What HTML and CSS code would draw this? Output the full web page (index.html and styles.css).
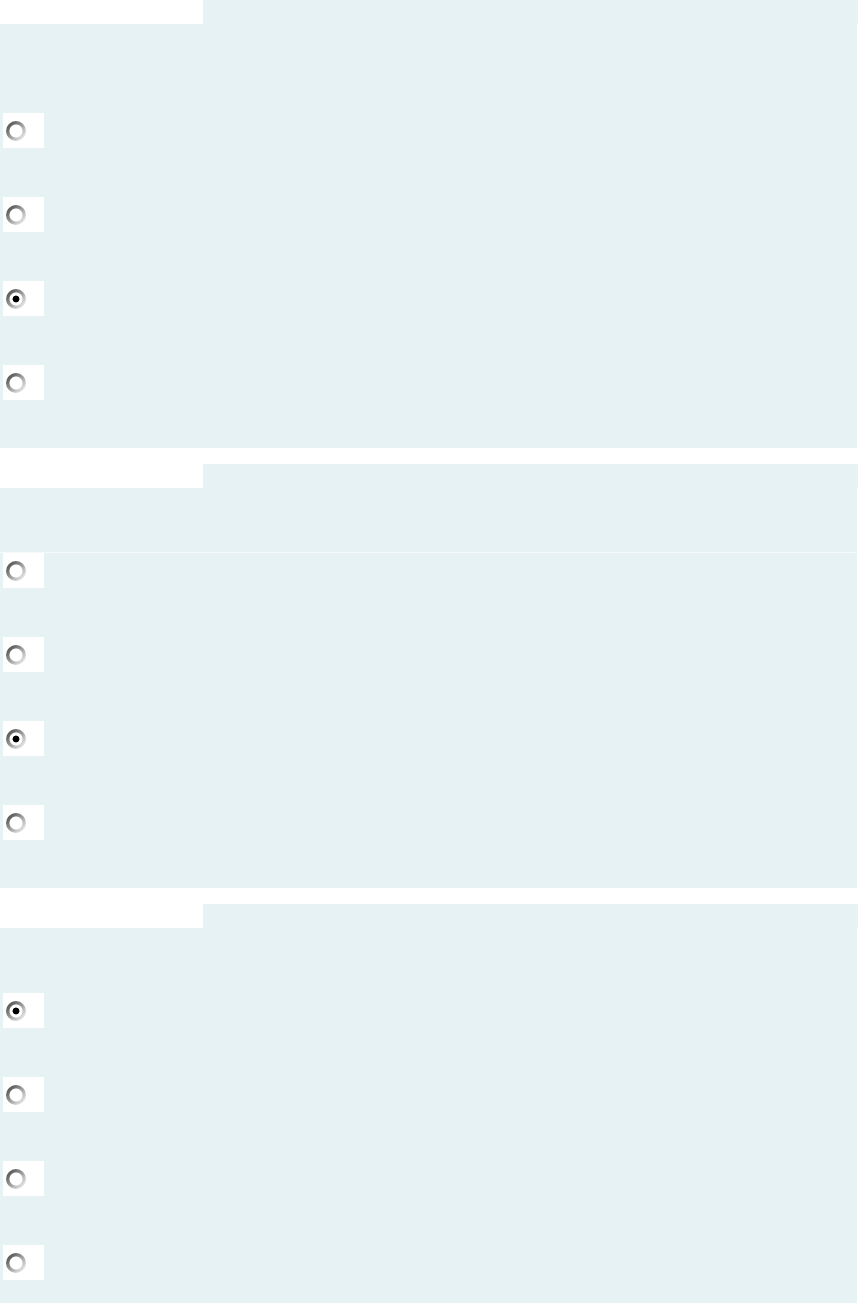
FILE: index.html
```html
<!DOCTYPE html>
<html lang="en">
  <head>
    <meta charset="UTF-8" />
    <meta name="viewport" content="width=device-width, initial-scale=1.0" />
    <title>Survey</title>
    <link rel="stylesheet" href="styles.css">
  </head>
  <body>
    <main>
      <section class="question q-first">
        <div class="q-head"><div class="q-tab"></div></div>
        <div class="q-body">
          <ul class="options">
            <li><label class="opt"><input type="radio" name="q1" /></label></li>
            <li><label class="opt"><input type="radio" name="q1" /></label></li>
            <li><label class="opt"><input type="radio" name="q1" checked /></label></li>
            <li><label class="opt"><input type="radio" name="q1" /></label></li>
          </ul>
        </div>
      </section>
      <section class="question q-lined">
        <div class="q-head"><div class="q-tab"></div></div>
        <div class="q-body">
          <ul class="options">
            <li><label class="opt"><input type="radio" name="q2" /></label></li>
            <li><label class="opt"><input type="radio" name="q2" /></label></li>
            <li><label class="opt"><input type="radio" name="q2" checked /></label></li>
            <li><label class="opt"><input type="radio" name="q2" /></label></li>
          </ul>
        </div>
      </section>
      <section class="question">
        <div class="q-head"><div class="q-tab"></div></div>
        <div class="q-body">
          <ul class="options">
            <li><label class="opt"><input type="radio" name="q3" checked /></label></li>
            <li><label class="opt"><input type="radio" name="q3" /></label></li>
            <li><label class="opt"><input type="radio" name="q3" /></label></li>
            <li><label class="opt"><input type="radio" name="q3" /></label></li>
          </ul>
        </div>
      </section>
    </main>
  </body>
</html>
```

FILE: styles.css
```css
* {
  margin: 0;
  padding: 0;
  box-sizing: border-box;
  font-family: "Liberation Sans", Arial, sans-serif;
}

body {
  background-color: #fff;
  overflow-x: hidden;
}

.question {
  margin-bottom: 16px;
}

.q-head {
  height: 24px;
  background-color: #e6f2f4;
}

.q-tab {
  width: 203px;
  height: 24px;
  background-color: #fff;
}

.q-body {
  margin-right: 1px;
  padding-top: 64px;
  padding-bottom: 48px;
  background-color: #e6f2f4;
}

.q-first .q-body {
  padding-top: 88px;
}

.options {
  list-style: none;
  display: flex;
  flex-direction: column;
  gap: 49px;
  border-top: 1px solid #e6f2f4;
}

.q-lined .options {
  border-top-color: #f5fafb;
}

.opt {
  display: block;
  width: 41px;
  height: 35px;
  margin-left: 3px;
  padding: 8px 0 0 3px;
  background-color: #fff;
}

.opt input {
  -webkit-appearance: none;
  appearance: none;
  display: block;
  width: 20px;
  height: 20px;
  border-radius: 50%;
  background:
    radial-gradient(circle, #fff 0 6px, transparent 7px),
    linear-gradient(135deg, #606060 20%, #a8a8a8 55%, #e6e6e6 85%);
  filter: blur(0.4px);
}

.opt input:checked {
  background:
    radial-gradient(circle, #000 0 3px, #fff 3.8px 6px, transparent 7px),
    linear-gradient(135deg, #606060 20%, #a8a8a8 55%, #e6e6e6 85%);
}
```
